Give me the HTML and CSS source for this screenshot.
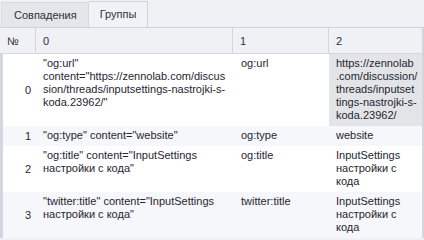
FILE: index.html
```html
<!DOCTYPE html>
<html lang="ru">
<head>
  <meta charset="UTF-8">
  <title>Группы</title>
  <link rel="stylesheet" href="styles.css">
</head>
<body>
  <div class="tabs">
    <div class="tab">Совпадения</div>
    <div class="tab active">Группы</div>
  </div>

  <table class="grid">
    <colgroup>
      <col class="c-num">
      <col class="c-0">
      <col class="c-1">
      <col class="c-2">
    </colgroup>
    <thead>
      <tr><th>№</th><th>0</th><th>1</th><th>2</th></tr>
    </thead>
    <tbody>
      <tr>
        <td class="num">0</td>
        <td>"og:url"<br>content="https://zennolab.com/discus<br>sion/threads/inputsettings-nastrojki-s-<br>koda.23962/"</td>
        <td>og:url</td>
        <td class="selected">https://zennolab<br>.com/discussion/<br>threads/inputset<br>tings-nastrojki-s-<br>koda.23962/</td>
      </tr>
      <tr class="alt">
        <td class="num">1</td>
        <td>"og:type" content="website"</td>
        <td>og:type</td>
        <td>website</td>
      </tr>
      <tr>
        <td class="num">2</td>
        <td>"og:title" content="InputSettings<br>настройки с кода"</td>
        <td>og:title</td>
        <td>InputSettings<br>настройки с<br>кода</td>
      </tr>
      <tr class="alt">
        <td class="num">3</td>
        <td>"twitter:title" content="InputSettings<br>настройки с кода"</td>
        <td>twitter:title</td>
        <td>InputSettings<br>настройки с<br>кода</td>
      </tr>
    </tbody>
  </table>
</body>
</html>
```

FILE: styles.css
```css
body {
  margin: 0;
  width: 424px;
  height: 240px;
  overflow: hidden;
  background-color: #f0f1f5;
  font-family: 'Liberation Sans', Arial, sans-serif;
  font-size: 11px;
  color: #1f2630;
}
.tabs {
  display: flex;
  align-items: flex-end;
  height: 27px;
  padding-left: 1px;
  border-bottom: 1px solid #cfd3d9;
}
.tab {
  height: 24px;
  line-height: 24px;
  padding: 0 11px 0 12px;
  background-color: #e4e6ea;
  border: 1px solid #d6d9de;
  border-bottom: none;
  color: #2a323e;
}
.tab.active {
  height: 25px;
  line-height: 25px;
  padding: 0 11px;
  background-color: #f1f2f6;
  border-color: #d0d4da;
  border-left: none;
}
.grid {
  width: 424px;
  table-layout: fixed;
  border-collapse: separate;
  border-spacing: 0;
  background-color: white;
}
.c-num { width: 36px; }
.c-0 { width: 197px; }
.c-1 { width: 96px; }
.c-2 { width: 95px; }
.grid th {
  height: 25px;
  padding: 0 7px;
  text-align: left;
  font-weight: normal;
  background-color: #f0f1f5;
  border-right: 1px solid #d3d6dc;
  border-bottom: 1px solid #d3d6dc;
  color: #28303b;
}
.grid th:last-child {
  border-right: 2px solid #d3d6dc;
}
.grid td {
  height: 13px;
  padding: 3px 4px 4px 7px;
  line-height: 13px;
  vertical-align: top;
  white-space: nowrap;
  overflow: hidden;
}
.grid td:nth-child(3) {
  padding-left: 8px;
}
.grid td:last-child {
  box-shadow: inset -2px 0 #d3d6dc;
}
.grid td.num {
  padding: 0 5px 0 0;
  text-align: right;
  vertical-align: middle;
  box-shadow: inset 3px 0 #d2d6dd;
}
.grid tr.alt td {
  background-color: #f6f7fb;
}
.grid td.selected {
  background-color: #e3e4e8;
}
```
